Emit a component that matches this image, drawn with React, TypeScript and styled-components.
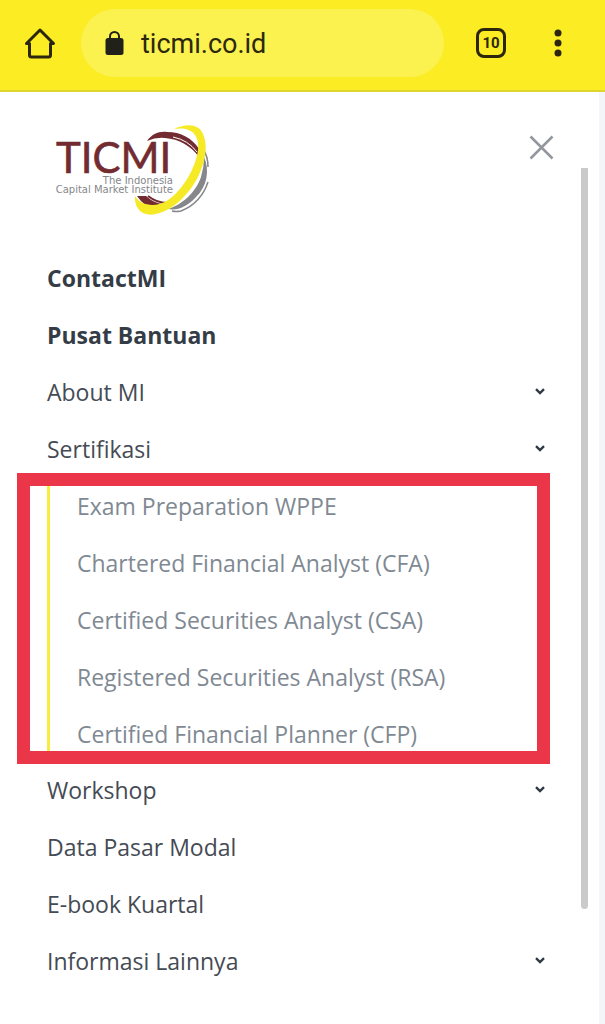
import React from "react";
import styled, { createGlobalStyle } from "styled-components";

const GlobalStyle = createGlobalStyle`
  * { box-sizing: border-box; }
  body { margin: 0; background: #f4f5f9; font-family: "Open Sans", sans-serif; }
  button { border: 0; padding: 0; background: none; font: inherit; color: inherit; text-align: left; cursor: pointer; }
  a { color: inherit; text-decoration: none; }
  svg { display: block; }
`;

const Toolbar = styled.header`
  display: flex;
  align-items: center;
  height: 92px;
  padding: 0 27px 4px 20px;
  background: #fbec23;
  border-bottom: 2px solid #e0d52f;
  color: #2b260c;
`;

const ToolButton = styled.button`
  display: flex;
  align-items: center;
  justify-content: center;
  flex: none;
  width: 40px;
  height: 44px;
`;

const AddressBar = styled.div`
  display: flex;
  flex: 1;
  align-items: center;
  gap: 17px;
  height: 68px;
  min-width: 0;
  margin: 0 27px 0 21px;
  padding: 0 24px;
  border-radius: 34px;
  background: #fbf14f;
`;

const Address = styled.input`
  flex: 1;
  min-width: 0;
  padding: 2px 0 0;
  border: 0;
  outline: 0;
  background: none;
  color: #2b280f;
  font: 27px/36px Roboto, sans-serif;
`;

const TabCount = styled.span`
  display: flex;
  align-items: center;
  justify-content: center;
  width: 30px;
  height: 30px;
  border: 3px solid currentColor;
  border-radius: 8px;
  font: 700 15px/20px Roboto, sans-serif;
`;

const MenuButton = styled(ToolButton)`
  margin-left: 27px;
`;

const Drawer = styled.main`
  display: flex;
  align-items: flex-start;
  min-height: calc(100vh - 92px);
  margin-right: 6px;
  padding-right: 11px;
  background: #fff;
`;

const DrawerContent = styled.div`
  flex: 1;
  min-width: 0;
  padding: 27px 26px 24px 47px;
`;

const ScrollThumb = styled.div`
  flex: none;
  width: 7px;
  height: 741px;
  margin-top: 76px;
  border-radius: 0 0 4px 4px;
  background: #cacaca;
`;

const DrawerHead = styled.div`
  display: flex;
  align-items: flex-start;
  justify-content: space-between;
  height: 130px;
`;

const CloseButton = styled.button`
  margin-top: 15px;
`;

const List = styled.ul`
  margin: 0;
  padding: 0;
  list-style: none;
`;

const rowStyle = `
  display: flex;
  align-items: center;
  justify-content: space-between;
  width: 100%;
  height: 57px;
  padding-right: 10px;
  font-size: 23px;
  line-height: 32px;
  white-space: nowrap;
`;

const RowLink = styled.a<{ $bold?: boolean }>`
  ${rowStyle}
  color: ${(p) => (p.$bold ? "#343c46" : "#454b54")};
  font-weight: ${(p) => (p.$bold ? 700 : 400)};
`;

const RowButton = styled.button`
  && { ${rowStyle} }
  color: #454b54;
`;

const SubMenu = styled.div`
  position: relative;
  margin-bottom: -1px;
`;

const SubList = styled(List)`
  padding-left: 27px;
  border-left: 3px solid #f8ec3f;
`;

const SubLink = styled.a`
  ${rowStyle}
  color: #7f8993;
`;

const Highlight = styled.div`
  position: absolute;
  inset: -4px 5px -2px -30px;
  border: 13px solid #eb3549;
  pointer-events: none;
`;

const Chevron = () => (
  <svg width="10" height="8" viewBox="0 0 10 8" fill="none" stroke="#303943" strokeWidth="2.4" aria-hidden="true">
    <path d="M1 1.2 5 5 9 1.2" />
  </svg>
);

const Logo = () => (
  <svg width="164" height="100" viewBox="47 119 164 100" role="img" aria-label="TICMI">
    <path fill="#722b30" d="M147 141C152 134 159 131 167 132C181 132 192 138 199 149L199 157C191 146 179 139 165 138Q156 137 147 141Z" />
    <path fill="none" stroke="#fff" strokeWidth="1" d="M173 137Q188 140 197 152" />
    <path fill="#85878b" d="M204 157C210 170 207 187 196 197C187 207 177 211 168 209C182 205 196 192 201 177Q204 167 204 157Z" />
    <path fill="none" stroke="#85878b" strokeWidth="1.5" d="M203 149Q208 156 208 167M208 182Q201 203 181 211Q176 212 172 211" />
    <path fill="#722b30" d="M137 196H146Q155 204 164 204L157 210Q145 208 137 196Z" />
    <path fill="none" stroke="#722b30" strokeWidth="2" d="M148 196Q157 203 167 203" />
    <path fill="#f6ea27" d="M174 129C187 123 199 124 203 134C208 145 206 160 198 177C189 194 174 210 156 214C144 217 134 210 135 196C141 206 156 208 168 200C183 190 196 167 198 150C200 134 190 126 174 129Z" />
    <text x="56" y="173" fill="#722b30" stroke="#722b30" strokeWidth="0.6" fontFamily="Lato, sans-serif" fontSize="42">TICMI</text>
    <text x="173" y="184" textAnchor="end" fill="#85878b" fontFamily="DejaVu Sans, sans-serif" fontSize="10">The Indonesia</text>
    <text x="173" y="193" textAnchor="end" fill="#85878b" fontFamily="DejaVu Sans, sans-serif" fontSize="10">Capital Market Institute</text>
  </svg>
);

const certifications = [
  "Exam Preparation WPPE",
  "Chartered Financial Analyst (CFA)",
  "Certified Securities Analyst (CSA)",
  "Registered Securities Analyst (RSA)",
  "Certified Financial Planner (CFP)",
];

type Item = { label: string; bold?: boolean; expands?: boolean; children?: string[] };

const items: Item[] = [
  { label: "ContactMI", bold: true },
  { label: "Pusat Bantuan", bold: true },
  { label: "About MI", expands: true },
  { label: "Sertifikasi", expands: true, children: certifications },
  { label: "Workshop", expands: true },
  { label: "Data Pasar Modal" },
  { label: "E-book Kuartal" },
  { label: "Informasi Lainnya", expands: true },
];

const MenuItem = ({ item }: { item: Item }) => (
  <li>
    {item.expands ? (
      <RowButton type="button" aria-expanded={!!item.children}>
        {item.label}
        <Chevron />
      </RowButton>
    ) : (
      <RowLink href="#" $bold={item.bold}>{item.label}</RowLink>
    )}
    {item.children && (
      <SubMenu>
        <SubList>
          {item.children.map((label) => (
            <li key={label}><SubLink href="#">{label}</SubLink></li>
          ))}
        </SubList>
        <Highlight />
      </SubMenu>
    )}
  </li>
);

export default function App() {
  return (
    <>
      <GlobalStyle />
      <Toolbar>
        <ToolButton type="button" aria-label="Home">
          <svg width="32" height="32" viewBox="0 0 32 32" fill="none" stroke="currentColor" strokeWidth="3" strokeLinejoin="round">
            <path d="M2.5 16.5 16 3 29.5 16.5H26.5V28Q26.5 30 24.5 30H7.5Q5.5 30 5.5 28V16.5Z" />
          </svg>
        </ToolButton>
        <AddressBar>
          <svg width="19" height="24" viewBox="0 0 19 24" aria-hidden="true">
            <rect x="0.5" y="7" width="18" height="17" rx="2.5" fill="#222119" />
            <path d="M5 8V5.5a4.5 4.5 0 0 1 9 0V8" fill="none" stroke="#222119" strokeWidth="2" />
          </svg>
          <Address aria-label="Address" defaultValue="ticmi.co.id" />
        </AddressBar>
        <ToolButton type="button" aria-label="Open tabs"><TabCount>10</TabCount></ToolButton>
        <MenuButton type="button" aria-label="Browser menu">
          <svg width="8" height="28" viewBox="0 0 8 28" fill="currentColor">
            <circle cx="4" cy="4" r="3.5" />
            <circle cx="4" cy="14" r="3.5" />
            <circle cx="4" cy="24" r="3.5" />
          </svg>
        </MenuButton>
      </Toolbar>
      <Drawer>
        <DrawerContent>
          <DrawerHead>
            <Logo />
            <CloseButton type="button" aria-label="Close menu">
              <svg width="27" height="27" viewBox="0 0 27 27" fill="none" stroke="#92979e" strokeWidth="2.5">
                <path d="M2.5 2.5 24.5 24.5M24.5 2.5 2.5 24.5" />
              </svg>
            </CloseButton>
          </DrawerHead>
          <nav aria-label="Main menu">
            <List>
              {items.map((item) => <MenuItem key={item.label} item={item} />)}
            </List>
          </nav>
        </DrawerContent>
        <ScrollThumb />
      </Drawer>
    </>
  );
}
